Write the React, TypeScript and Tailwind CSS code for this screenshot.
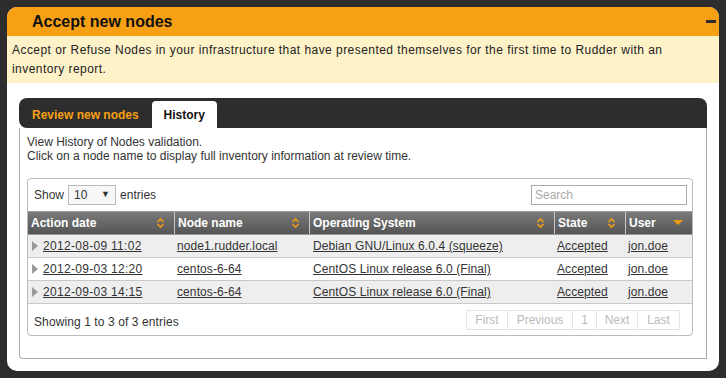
import type { ReactNode } from 'react'

const rows = [
  { date: '2012-08-09 11:02', node: 'node1.rudder.local', os: 'Debian GNU/Linux 6.0.4 (squeeze)', state: 'Accepted', user: 'jon.doe' },
  { date: '2012-09-03 12:20', node: 'centos-6-64', os: 'CentOS Linux release 6.0 (Final)', state: 'Accepted', user: 'jon.doe' },
  { date: '2012-09-03 14:15', node: 'centos-6-64', os: 'CentOS Linux release 6.0 (Final)', state: 'Accepted', user: 'jon.doe' },
]

const cols = 'grid grid-cols-[147px_135px_245px_71px_66px]'

function SortBoth() {
  return (
    <svg width="9" height="12" viewBox="0 0 9 12" className="flex-shrink-0">
      <path d="M1.5 5 L4.5 2 L7.5 5" fill="none" stroke="#f39c12" strokeWidth="1.6" />
      <path d="M1.5 7 L4.5 10 L7.5 7" fill="none" stroke="#f39c12" strokeWidth="1.6" />
    </svg>
  )
}

function SortDown() {
  return (
    <svg width="10" height="6" viewBox="0 0 10 6" className="flex-shrink-0">
      <path d="M0 0 L10 0 L5 5 Z" fill="#f39c12" />
    </svg>
  )
}

function HeadCell({ label, icon, last }: { label: string; icon: ReactNode; last?: boolean }) {
  return (
    <div className={`flex items-center justify-between pl-[3px] pr-[9px] h-[22px] ${last ? '' : 'border-r border-[#c8c8c8]'}`}>
      <span>{label}</span>
      {icon}
    </div>
  )
}

const pages = [
  { label: 'First', w: 'w-[41px]' },
  { label: 'Previous', w: 'w-[65px]' },
  { label: '1', w: 'w-[24px]' },
  { label: 'Next', w: 'w-[41px]' },
  { label: 'Last', w: 'w-[41px]' },
]

export default function App() {
  return (
    <div className="w-[726px] h-[378px] bg-[#2d2d2d] pt-[7px] pl-[7px] font-['Liberation_Sans',Arial,sans-serif] text-[#222]">
      <div className="w-[712px] h-[364px] bg-white rounded-[10px] overflow-hidden flex flex-col">
        <div className="h-[29px] bg-[#f7a014] flex items-center justify-between pl-[25px] pr-[3px]">
          <span className="text-[16px] font-bold text-[#111]">Accept new nodes</span>
          <span className="w-[10px] h-[3px] bg-[#2d2d2d]" />
        </div>
        <div className="h-[47px] bg-[#fef2c9] px-[5px] pt-[5px] text-[12px] leading-[19px] text-[#222] tracking-[0.45px]">
          Accept or Refuse Nodes in your infrastructure that have presented themselves for the first time to Rudder with an
          <br />
          inventory report.
        </div>

        <div className="px-[12px] pt-[15px]">
          <div className="h-[30px] bg-[#2d2d2d] rounded-[8px] rounded-br-none flex items-end pl-[13px] gap-[13px]">
            <span className="h-[27px] flex items-center text-[12px] font-bold text-[#f7a014]">Review new nodes</span>
            <span className="h-[27px] w-[65px] bg-white rounded-t-[4px] flex items-center justify-center text-[12px] font-bold text-[#111]">History</span>
          </div>
          <div className="h-[231px] border border-t-0 border-[#aaa] rounded-bl-[4px] px-[7px] pt-[7px]">
            <div className="text-[12px] leading-[14px] text-[#333]">
              <p>View History of Nodes validation.</p>
              <p>Click on a node name to display full inventory information at review time.</p>
            </div>
            <div className="mt-[15px] w-[666px] h-[158px] border border-[#bbb] rounded-[4px] flex flex-col">
              <div className="h-[32px] flex items-center justify-between pl-[6px] pr-[5px] text-[12px] text-[#333]">
                <div className="flex items-center gap-[4px]">
                  <span>Show</span>
                  <div className="w-[48px] h-[20px] border border-[#bbb] bg-[#f7f7f7] flex items-center justify-between px-[5px]">
                    <span>10</span>
                    <span className="text-[9px]">▼</span>
                  </div>
                  <span>entries</span>
                </div>
                <div className="w-[156px] h-[20px] border border-[#aaa] flex items-center px-[3px] text-[#aaa]">Search</div>
              </div>
              <div className={`${cols} bg-gradient-to-b from-[#7a7a7a] to-[#555] text-white font-bold text-[12px] border-y border-[#999]`}>
                <HeadCell label="Action date" icon={<SortBoth />} />
                <HeadCell label="Node name" icon={<SortBoth />} />
                <HeadCell label="Operating System" icon={<SortBoth />} />
                <HeadCell label="State" icon={<SortBoth />} />
                <HeadCell label="User" icon={<SortDown />} last />
              </div>
              {rows.map((r, i) => (
                <div key={i} className={`${cols} h-[23px] items-center text-[12px] tracking-[0.1px] text-[#333] border-b border-[#c8c8c8] ${i % 2 === 0 ? 'bg-[#eeeeee]' : 'bg-white'}`}>
                  <div className="flex items-center pl-[4px] gap-[5px]">
                    <svg width="6" height="10" viewBox="0 0 6 10"><path d="M0 0 L6 5 L0 10 Z" fill="#999" /></svg>
                    <span className="underline tracking-[0.3px]">{r.date}</span>
                  </div>
                  <span className="pl-[2px] underline">{r.node}</span>
                  <span className="pl-[3px] underline">{r.os}</span>
                  <span className="pl-[2px] underline">{r.state}</span>
                  <span className="pl-[2px] underline">{r.user}</span>
                </div>
              ))}
              <div className="flex-1 flex items-start justify-between pl-[6px] pr-[12px] pt-[6px] text-[12px]">
                <span className="mt-[3px] text-[#333] tracking-[0.1px]">Showing 1 to 3 of 3 entries</span>
                <div className="flex h-[20px] border border-[#e4e4e4] text-[#bbb]">
                  {pages.map((p, i) => (
                    <span key={p.label} className={`${p.w} flex items-center justify-center ${i < pages.length - 1 ? 'border-r border-[#e4e4e4]' : ''}`}>
                      {p.label}
                    </span>
                  ))}
                </div>
              </div>
            </div>
          </div>
        </div>
      </div>
    </div>
  )
}
